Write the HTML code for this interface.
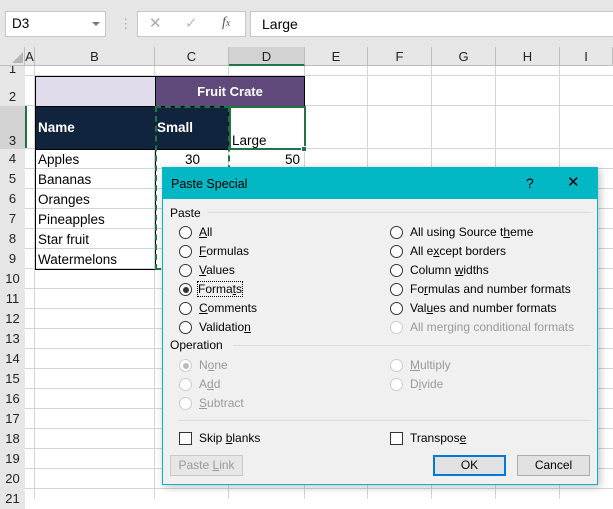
<!DOCTYPE html><html><head><style>
body{margin:0;width:613px;height:499px;overflow:hidden;position:relative;background:#fff;font-family:"Liberation Sans",sans-serif;}
.a{position:absolute;box-sizing:border-box}
.t{position:absolute;white-space:nowrap;font-size:13.5px;color:#000;line-height:20px}
.vl{position:absolute;width:1px;background:#d4d4d4;top:66px;height:433px}
.hl{position:absolute;height:1px;background:#d4d4d4;left:25px;right:0}
.rh{position:absolute;left:0;width:25px;text-align:center;font-size:13px;color:#222;background:#e6e6e6}
.ch{position:absolute;top:47px;height:19px;text-align:center;font-size:13px;line-height:19px;color:#222;border-right:1px solid #bdbdbd;box-sizing:border-box}
.d{font-size:12px;color:#000;position:absolute;white-space:nowrap;line-height:14px}
.r{position:absolute;width:13px;height:13px;border:1px solid #333;border-radius:50%;box-sizing:border-box;background:#fff}
.g{color:#999}.r.g{border-color:#ccc}
.cb{position:absolute;width:13px;height:13px;border:1px solid #333;box-sizing:border-box;background:#fff}
.b{position:absolute;height:21px;border:1px solid #adadad;background:#e1e1e1;font-size:12px;text-align:center;line-height:19px;box-sizing:border-box}
</style></head><body>
<div class="a" style="left:0;top:0;width:613px;height:47px;background:#e6e6e6"></div>
<div class="a" style="left:5px;top:11px;width:101px;height:26px;background:#fff;border:1px solid #c6c6c6"></div>
<div class="t" style="left:12px;top:14px">D3</div>
<div class="a" style="left:92px;top:22px;border-left:4px solid transparent;border-right:4px solid transparent;border-top:4px solid #777"></div>
<div class="t" style="left:119px;top:14px;color:#aaa">⋮</div>
<div class="a" style="left:137px;top:11px;width:109px;height:26px;background:#fff;border:1px solid #c6c6c6"></div>
<div class="t" style="left:149px;top:14px;color:#aaa;font-size:15px">✕</div>
<div class="t" style="left:185px;top:14px;color:#bbb;font-size:15px">✓</div>
<div class="t" style="left:222px;top:13px;color:#555;font-style:italic;font-family:'Liberation Serif',serif;font-size:14px">f<span style="font-size:10px">x</span></div>
<div class="a" style="left:250px;top:11px;width:363px;height:26px;background:#fff;border:1px solid #c6c6c6;border-right:none"></div>
<div class="t" style="left:262px;top:14px;font-size:14px">Large</div>
<div class="a" style="left:0;top:47px;width:613px;height:19px;background:#e6e6e6;border-bottom:1px solid #bdbdbd"></div>
<div class="a" style="left:12px;top:52px;border-left:11px solid transparent;border-bottom:11px solid #b5b5b5"></div>
<div class="ch" style="left:0;width:25px"></div>
<div class="ch" style="left:25px;width:10px">A</div>
<div class="ch" style="left:35px;width:120px">B</div>
<div class="ch" style="left:155px;width:74px">C</div>
<div class="ch" style="left:229px;width:76px;background:#d2d2d2;border-bottom:2px solid #217346">D</div>
<div class="ch" style="left:305px;width:63px">E</div>
<div class="ch" style="left:368px;width:64px">F</div>
<div class="ch" style="left:432px;width:64px">G</div>
<div class="ch" style="left:496px;width:64px">H</div>
<div class="ch" style="left:560px;width:53px">I</div>
<div class="a" style="left:0;top:66px;width:25px;height:433px;background:#e6e6e6;border-right:1px solid #bdbdbd"></div>
<div class="rh" style="top:66px;height:10px;line-height:6px;overflow:hidden">1</div>
<div class="rh" style="top:76px;height:30px;line-height:42px">2</div>
<div class="rh" style="top:106px;height:43px;line-height:70px;background:#d2d2d2;border-right:2px solid #217346">3</div>
<div class="rh" style="top:149px;height:20px;line-height:20px">4</div>
<div class="rh" style="top:169px;line-height:20px">5</div><div class="rh" style="top:189px;line-height:20px">6</div><div class="rh" style="top:209px;line-height:20px">7</div><div class="rh" style="top:229px;line-height:20px">8</div><div class="rh" style="top:249px;line-height:20px">9</div><div class="rh" style="top:269px;line-height:20px">10</div><div class="rh" style="top:289px;line-height:20px">11</div><div class="rh" style="top:309px;line-height:20px">12</div><div class="rh" style="top:329px;line-height:20px">13</div><div class="rh" style="top:349px;line-height:20px">14</div><div class="rh" style="top:369px;line-height:20px">15</div><div class="rh" style="top:389px;line-height:20px">16</div><div class="rh" style="top:409px;line-height:20px">17</div><div class="rh" style="top:429px;line-height:20px">18</div><div class="rh" style="top:449px;line-height:20px">19</div><div class="rh" style="top:469px;line-height:20px">20</div><div class="rh" style="top:489px;line-height:20px">21</div>
<div class="vl" style="left:34px"></div><div class="vl" style="left:154px"></div><div class="vl" style="left:228px"></div><div class="vl" style="left:304px"></div><div class="vl" style="left:367px"></div><div class="vl" style="left:431px"></div><div class="vl" style="left:495px"></div><div class="vl" style="left:559px"></div>
<div class="hl" style="top:75px"></div><div class="hl" style="top:105px"></div><div class="hl" style="top:148px"></div><div class="hl" style="top:168px"></div><div class="hl" style="top:188px"></div><div class="hl" style="top:208px"></div><div class="hl" style="top:228px"></div><div class="hl" style="top:248px"></div><div class="hl" style="top:268px"></div><div class="hl" style="top:288px"></div><div class="hl" style="top:308px"></div><div class="hl" style="top:328px"></div><div class="hl" style="top:348px"></div><div class="hl" style="top:368px"></div><div class="hl" style="top:388px"></div><div class="hl" style="top:408px"></div><div class="hl" style="top:428px"></div><div class="hl" style="top:448px"></div><div class="hl" style="top:468px"></div><div class="hl" style="top:488px"></div>
<div class="a" style="left:35px;top:76px;width:120px;height:31px;background:#e1dcec;border:1px solid #000;border-right:none"></div>
<div class="a" style="left:155px;top:76px;width:150px;height:31px;background:#604a7b;border:1px solid #000;color:#fff;font-weight:bold;font-size:13px;text-align:center;line-height:29px">Fruit Crate</div>
<div class="a" style="left:35px;top:106px;width:194px;height:44px;background:#10243e;border:1px solid #000"></div>
<div class="t" style="left:38px;top:118px;color:#fff;font-weight:bold">Name</div>
<div class="t" style="left:157px;top:118px;color:#fff;font-weight:bold">Small</div>
<div class="a" style="left:229px;top:106px;width:77px;height:44px;border:2px solid #217346"></div>
<div class="a" style="left:301px;top:146px;width:6px;height:6px;background:#217346;border:1px solid #fff"></div>
<div class="t" style="left:232px;top:131px">Large</div>
<div class="a" style="left:35px;top:149px;width:121px;height:121px;border:1px solid #000;border-top:none"></div>
<div class="a" style="left:155px;top:106px;width:75px;height:164px;border:2px dashed #217346"></div>
<div class="t" style="left:38px;top:150px">Apples</div><div class="t" style="left:38px;top:170px">Bananas</div><div class="t" style="left:38px;top:190px">Oranges</div><div class="t" style="left:38px;top:210px">Pineapples</div><div class="t" style="left:38px;top:230px">Star fruit</div><div class="t" style="left:38px;top:250px">Watermelons</div>
<div class="t" style="left:185px;top:150px">30</div><div class="t" style="left:285px;top:150px">50</div>
<div class="a" style="left:162px;top:167px;width:436px;height:318px;background:#f0f0f0;border:1px solid #00b7c3;box-shadow:2px 2px 8px rgba(0,0,0,.25)"></div>
<div class="a" style="left:162px;top:167px;width:436px;height:32px;background:#00b7c3"></div>
<div class="d" style="left:171px;top:177px;font-size:12.5px">Paste Special</div>
<div class="d" style="left:526px;top:176px;font-size:14px">?</div>
<div class="d" style="left:567px;top:176px;font-size:15px">✕</div>
<div class="d" style="left:170px;top:206px">Paste</div>
<div class="a" style="left:207px;top:212px;width:384px;height:1px;background:#dcdcdc"></div>
<div class="r" style="left:179px;top:226px"></div><div class="d" style="left:199px;top:225px"><u>A</u>ll</div>
<div class="r" style="left:179px;top:245px"></div><div class="d" style="left:199px;top:244px"><u>F</u>ormulas</div>
<div class="r" style="left:179px;top:264px"></div><div class="d" style="left:199px;top:263px"><u>V</u>alues</div>
<div class="r" style="left:179px;top:283px"><div class="a" style="left:2.5px;top:2.5px;width:6px;height:6px;border-radius:50%;background:#333"></div></div><div class="d" style="left:198px;top:282px;outline:1px dotted #000">Forma<u>t</u>s</div>
<div class="r" style="left:179px;top:302px"></div><div class="d" style="left:199px;top:301px"><u>C</u>omments</div>
<div class="r" style="left:179px;top:321px"></div><div class="d" style="left:199px;top:320px">Validatio<u>n</u></div>
<div class="r" style="left:390px;top:226px"></div><div class="d" style="left:410px;top:225px">All using Source t<u>h</u>eme</div>
<div class="r" style="left:390px;top:245px"></div><div class="d" style="left:410px;top:244px">All e<u>x</u>cept borders</div>
<div class="r" style="left:390px;top:264px"></div><div class="d" style="left:410px;top:263px">Column <u>w</u>idths</div>
<div class="r" style="left:390px;top:283px"></div><div class="d" style="left:410px;top:282px">Fo<u>r</u>mulas and number formats</div>
<div class="r" style="left:390px;top:302px"></div><div class="d" style="left:410px;top:301px">Val<u>u</u>es and number formats</div>
<div class="r g" style="left:390px;top:321px"></div><div class="d g" style="left:410px;top:320px">All merging conditional formats</div>
<div class="d" style="left:170px;top:338px">Operation</div>
<div class="a" style="left:233px;top:345px;width:358px;height:1px;background:#dcdcdc"></div>
<div class="r g" style="left:179px;top:359px"><div class="a" style="left:2.5px;top:2.5px;width:6px;height:6px;border-radius:50%;background:#bbb"></div></div><div class="d g" style="left:199px;top:358px">N<u>o</u>ne</div>
<div class="r g" style="left:179px;top:378px"></div><div class="d g" style="left:199px;top:377px">A<u>d</u>d</div>
<div class="r g" style="left:179px;top:397px"></div><div class="d g" style="left:199px;top:396px"><u>S</u>ubtract</div>
<div class="r g" style="left:390px;top:359px"></div><div class="d g" style="left:410px;top:358px"><u>M</u>ultiply</div>
<div class="r g" style="left:390px;top:378px"></div><div class="d g" style="left:410px;top:377px">D<u>i</u>vide</div>
<div class="a" style="left:178px;top:420px;width:413px;height:1px;background:#dcdcdc"></div>
<div class="cb" style="left:179px;top:432px"></div><div class="d" style="left:199px;top:431px">Skip <u>b</u>lanks</div>
<div class="cb" style="left:390px;top:432px"></div><div class="d" style="left:410px;top:431px">Transpos<u>e</u></div>
<div class="b" style="left:170px;top:455px;width:73px;color:#999;border-color:#c8c8c8;background:#e6e6e6">Paste <u>L</u>ink</div>
<div class="b" style="left:433px;top:455px;width:73px;border:2px solid #0078d7;line-height:17px">OK</div>
<div class="b" style="left:517px;top:455px;width:73px">Cancel</div>
</body></html>
